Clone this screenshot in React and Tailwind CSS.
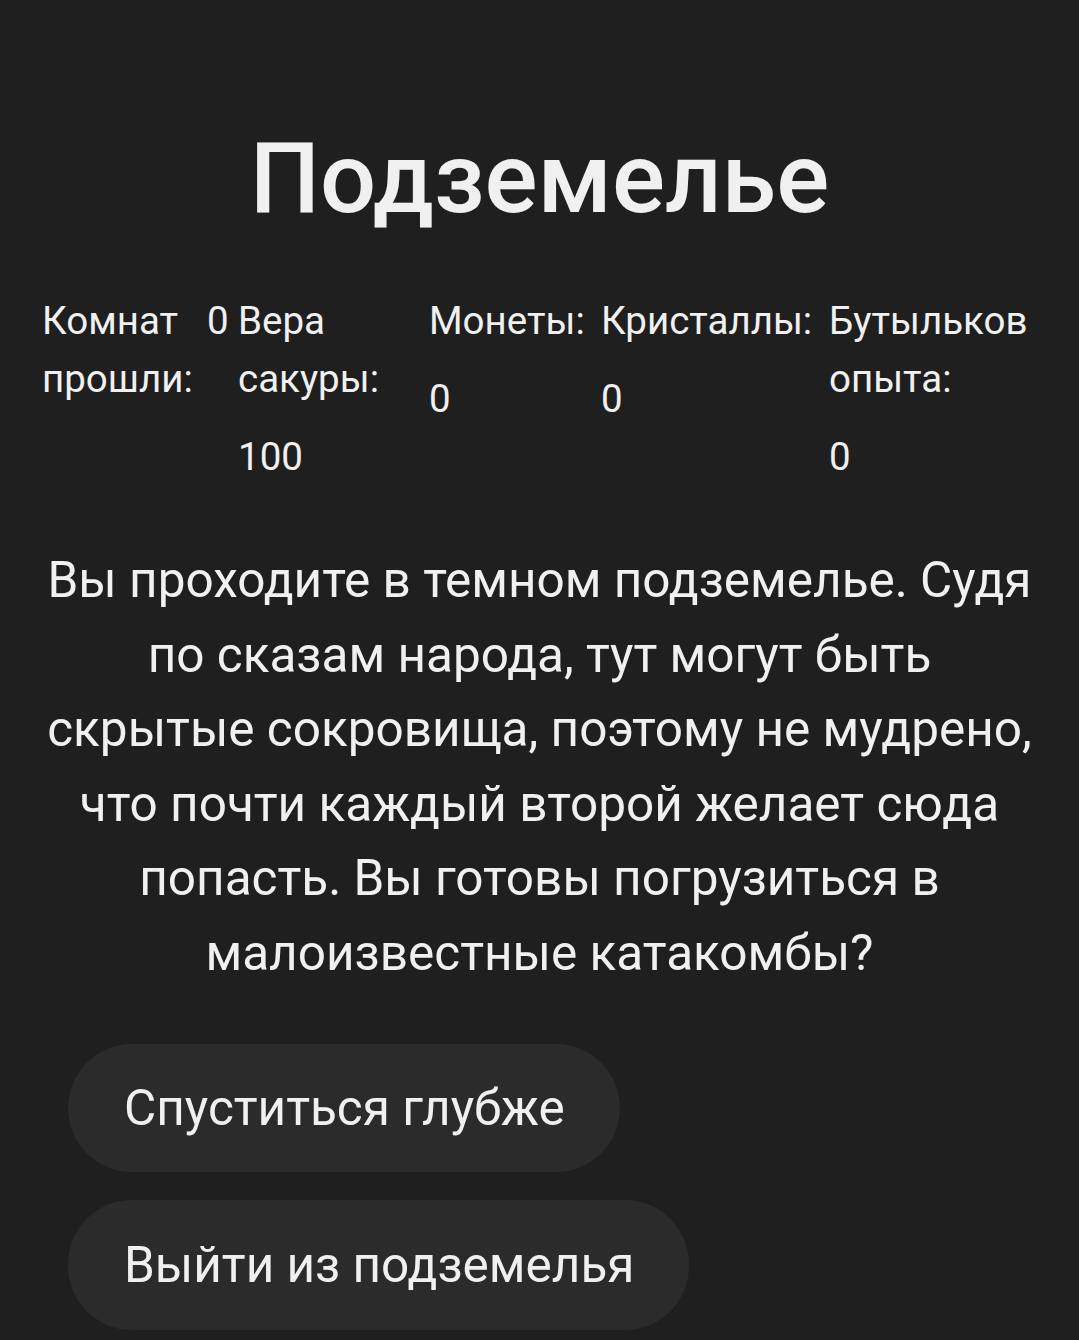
import React from "react";

const stats = [
  { label: "Вера сакуры:", value: 100, width: "w-[191px]" },
  { label: "Монеты:", value: 0, width: "w-[172px]" },
  { label: "Кристаллы:", value: 0, width: "w-[228px]" },
  { label: "Бутыльков опыта:", value: 0, width: "w-[200px]" },
];

function App() {
  return (
    <div
      className="min-h-screen bg-[#1f1f1f] text-[#f0f0f0]"
      style={{ fontFamily: "Roboto, 'Noto Sans', sans-serif" }}
    >
      <div className="pt-[129px]">
        {/* Title */}
        <h1 className="text-center text-[99px] leading-none font-medium">Подземелье</h1>

        {/* Stats */}
        <div className="flex items-start pl-[42px] mt-[64px] text-[38.5px] leading-[58px]">
          <div className="w-[196px] flex gap-x-[15px]">
            <span className="w-[150px]">Комнат прошли:</span>
            <span>0</span>
          </div>
          {stats.map((s) => (
            <div key={s.label} className={`${s.width} flex flex-col gap-y-[20px]`}>
              <span>{s.label}</span>
              <span>{s.value}</span>
            </div>
          ))}
        </div>

        {/* Story */}
        <p className="mt-[57px] px-[45px] text-center text-[49.5px] leading-[74.5px]">
          Вы проходите в темном подземелье. Судя по сказам народа, тут могут быть скрытые
          сокровища, поэтому не мудрено, что почти каждый второй желает сюда попасть. Вы готовы
          погрузиться в малоизвестные катакомбы?
        </p>

        {/* Actions */}
        <div className="mt-[54px] pl-[68px] flex flex-col items-start gap-[28px]">
          <button className="bg-[#2b2b2b] rounded-[64px] pl-[56px] pr-[55px] py-[36px] text-[49.5px] leading-[56px]">
            Спуститься глубже
          </button>
          <button className="bg-[#2b2b2b] rounded-[64px] pl-[56px] pr-[55px] py-[37px] text-[49.5px] leading-[56px]">
            Выйти из подземелья
          </button>
        </div>
      </div>
    </div>
  );
}

export default App;
